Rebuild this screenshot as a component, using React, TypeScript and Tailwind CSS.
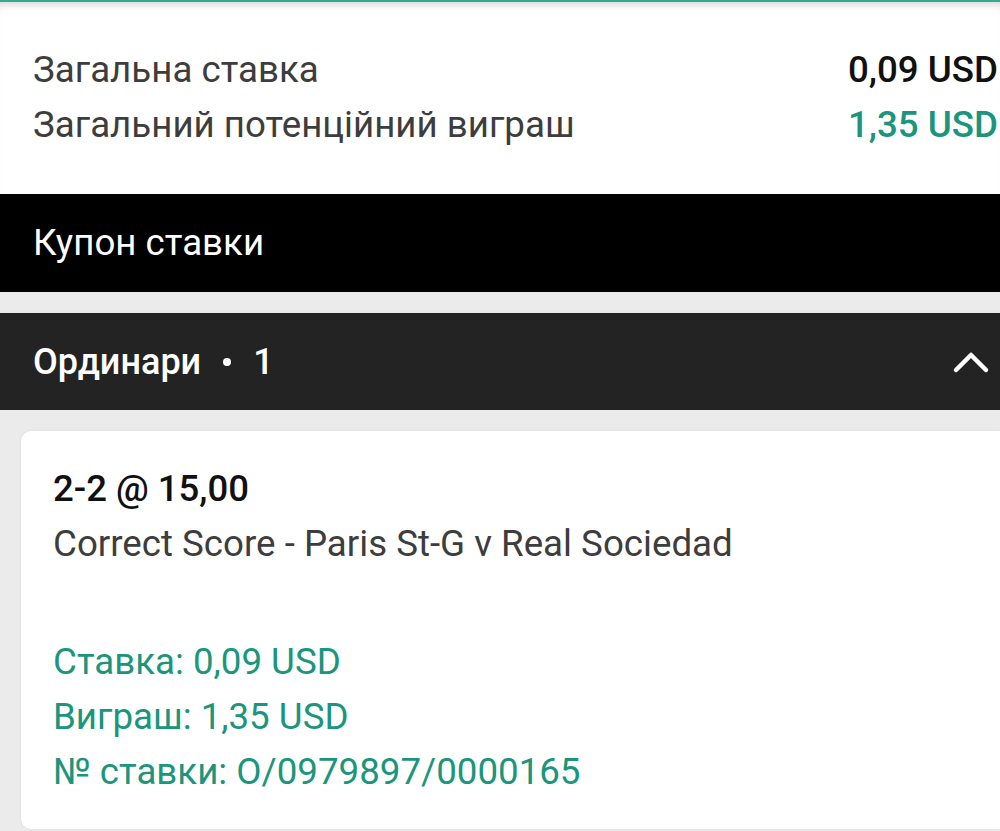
import React from 'react';

const font = { fontFamily: 'Roboto, "Noto Sans", sans-serif' };

export default function App() {
  return (
    <div className="w-[1000px] h-[831px] overflow-hidden bg-[#ebebeb]" style={font}>
      {/* totals */}
      <div className="bg-white border-t-2 border-[#3aa88e] shadow-[inset_0_8px_8px_-6px_rgba(0,0,0,0.18)] pt-[40px] pb-[42px] pl-[33px] pr-[2px]">
        <div className="flex justify-between items-center h-[55px] text-[36.7px] whitespace-nowrap">
          <span className="text-[#3d3d3d]">Загальна ставка</span>
          <span className="text-[#111] font-medium">0,09 USD</span>
        </div>
        <div className="flex justify-between items-center h-[55px] text-[36.7px] whitespace-nowrap">
          <span className="text-[#3d3d3d]">Загальний потенційний виграш</span>
          <span className="text-[#1b957b] font-medium">1,35 USD</span>
        </div>
      </div>

      {/* coupon header */}
      <div className="bg-black h-[98px] flex items-center px-[33px] text-white text-[36.7px]">
        Купон ставки
      </div>

      <div className="h-[21px]" />

      {/* singles header */}
      <div className="bg-[#232323] h-[97px] flex items-center justify-between pl-[33px] pr-[10px] text-white">
        <span className="text-[36px] font-medium flex items-center">
          Ординари
          <span className="mx-[22px] w-[8px] h-[8px] rounded-full bg-white inline-block" />
          1
        </span>
        <svg width="38" height="24" viewBox="0 0 38 24" fill="none">
          <path d="M4 20 L19 5 L34 20" stroke="white" strokeWidth="4.5" strokeLinecap="round" strokeLinejoin="round" />
        </svg>
      </div>

      {/* bet card */}
      <div className="pt-[21px] pl-[21px]">
        <div className="bg-white rounded-l-[10px] shadow-[0_0_3px_rgba(0,0,0,0.08)] pl-[32px] pt-[30px] h-[398px] whitespace-nowrap">
          <div className="text-[36.5px] font-medium text-[#111] leading-[55px]">2-2 @ 15,00</div>
          <div className="text-[36.7px] text-[#3d3d3d] leading-[55px]">
            Correct Score - Paris St-G v Real Sociedad
          </div>
          <div className="mt-[63px] text-[36.7px] text-[#1b957b] leading-[55px]">
            <div>Ставка: 0,09 USD</div>
            <div>Виграш: 1,35 USD</div>
            <div>№ ставки: O/0979897/0000165</div>
          </div>
        </div>
      </div>
    </div>
  );
}
